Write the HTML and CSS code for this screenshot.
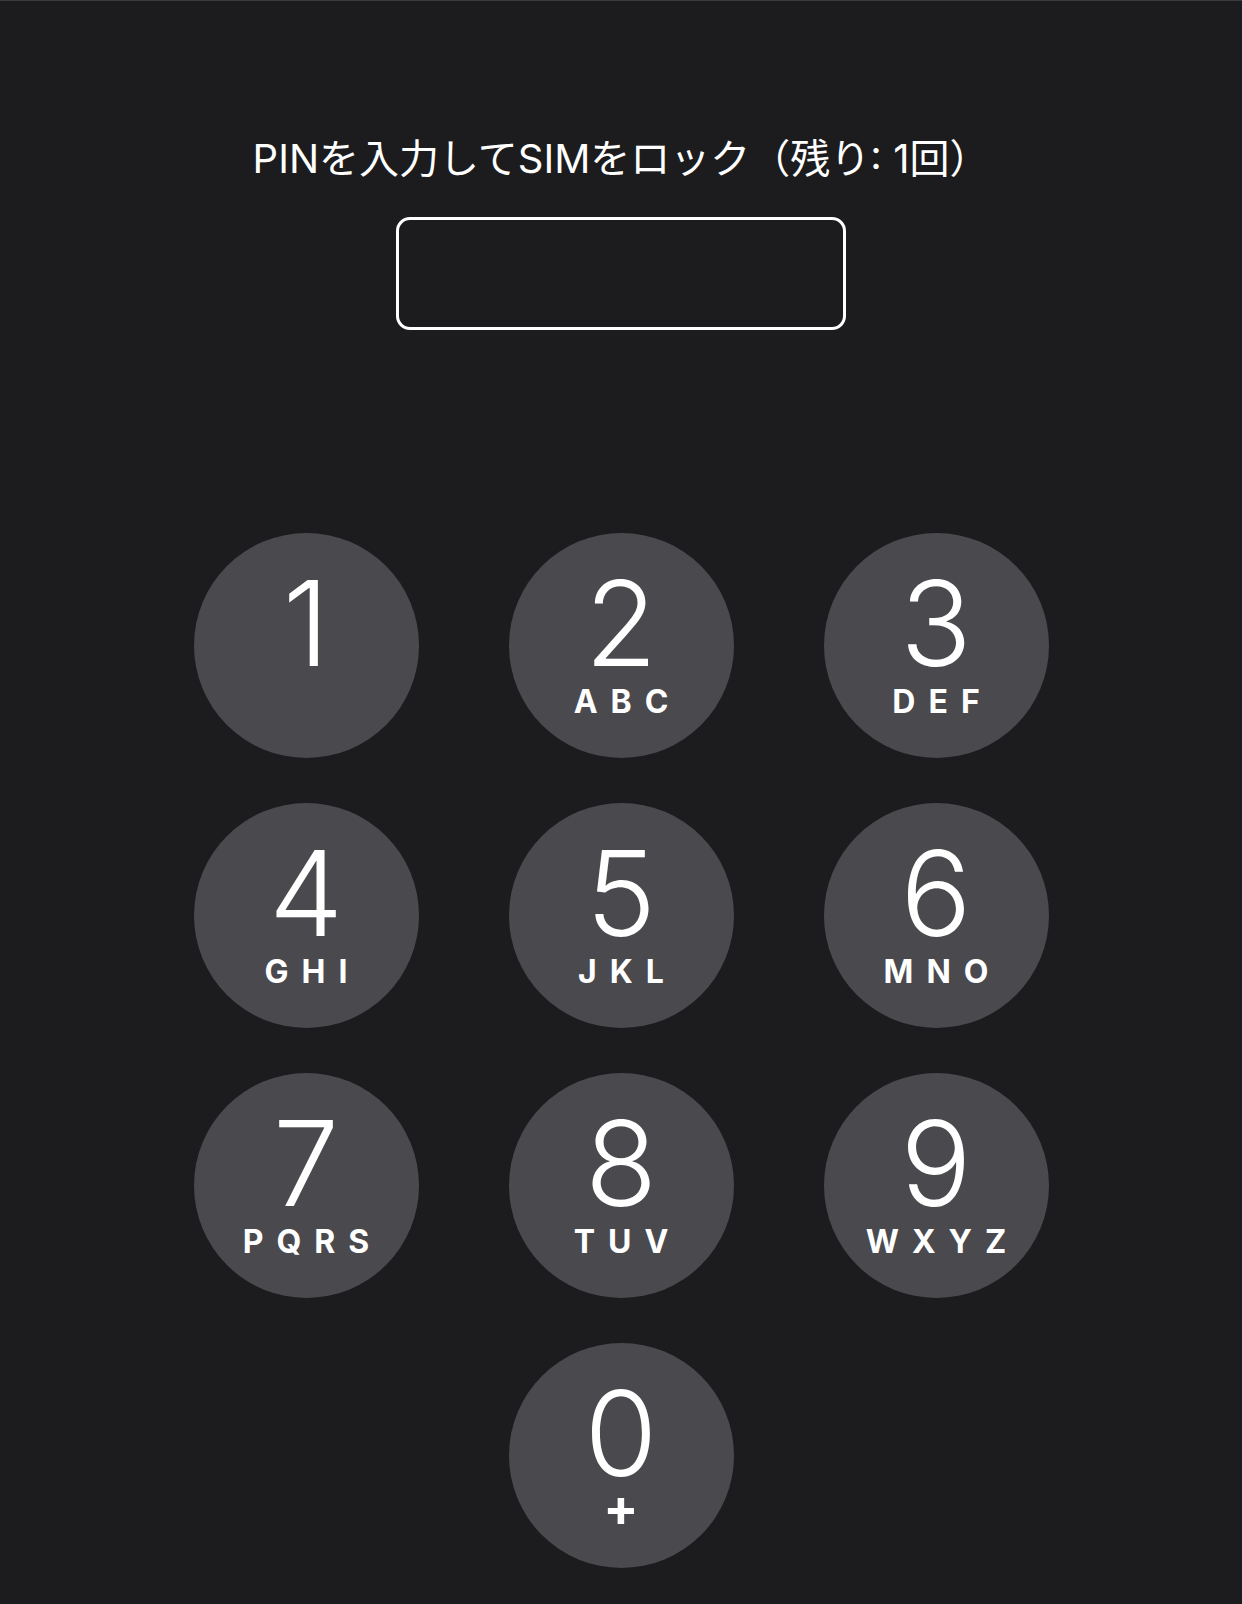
FILE: index.html
```html
<!DOCTYPE html>
<html lang="ja">
    <head>
        <meta charset="UTF-8" />
        <meta name="viewport" content="width=device-width, initial-scale=1.0" />
        <title>SIM PIN</title>
        <link rel="stylesheet" href="styles.css">
    </head>
    <body>
        <div class="screen">
            <div class="prompt">PINを入力してSIMをロック（残り: 1回）</div>

            <div class="pin-field"></div>

            <div class="keypad">
                <div class="key"><span class="digit">1</span><span class="letters"></span></div>
                <div class="key"><span class="digit">2</span><span class="letters">ABC</span></div>
                <div class="key"><span class="digit">3</span><span class="letters">DEF</span></div>
                <div class="key"><span class="digit">4</span><span class="letters">GHI</span></div>
                <div class="key"><span class="digit">5</span><span class="letters">JKL</span></div>
                <div class="key"><span class="digit">6</span><span class="letters">MNO</span></div>
                <div class="key"><span class="digit">7</span><span class="letters">PQRS</span></div>
                <div class="key"><span class="digit">8</span><span class="letters">TUV</span></div>
                <div class="key"><span class="digit">9</span><span class="letters">WXYZ</span></div>
                <div class="key zero"><span class="digit">0</span><span class="letters plus">+</span></div>
            </div>
        </div>
    </body>
</html>
```

FILE: styles.css
```css
html,
body {
    margin: 0;
    height: 100%;
    background: #1c1c1e;
}

.screen {
    height: 100%;
    box-sizing: border-box;
    border-top: 1px solid #3a3a3c;
    font-family: "Inter", "Noto Sans CJK JP", sans-serif;
    color: #ffffff;
    display: flex;
    flex-direction: column;
    align-items: center;
}

.prompt {
    margin-top: 130px;
    font-size: 40px;
    line-height: 56px;
}

.pin-field {
    margin-top: 30px;
    width: 450px;
    height: 113px;
    box-sizing: border-box;
    border: 3px solid #ffffff;
    border-radius: 14px;
}

.keypad {
    margin-top: 203px;
    display: grid;
    grid-template-columns: repeat(3, 225px);
    grid-auto-rows: 225px;
    column-gap: 90px;
    row-gap: 45px;
}

.key {
    width: 225px;
    height: 225px;
    border-radius: 50%;
    background: #4a494e;
    display: flex;
    flex-direction: column;
    align-items: center;
    padding-top: 40px;
    box-sizing: border-box;
    cursor: pointer;
}

.key.zero {
    grid-column: 2;
}

.digit {
    font-size: 118px;
    font-weight: 300;
    line-height: 100px;
}

.letters {
    margin-top: 12px;
    font-size: 32px;
    font-weight: 700;
    line-height: 34px;
    letter-spacing: 13px;
    padding-left: 13px;
    height: 34px;
}

.letters.plus {
    margin-top: 6px;
    font-size: 52px;
    line-height: 38px;
    letter-spacing: 0;
    padding-left: 0;
}
```
